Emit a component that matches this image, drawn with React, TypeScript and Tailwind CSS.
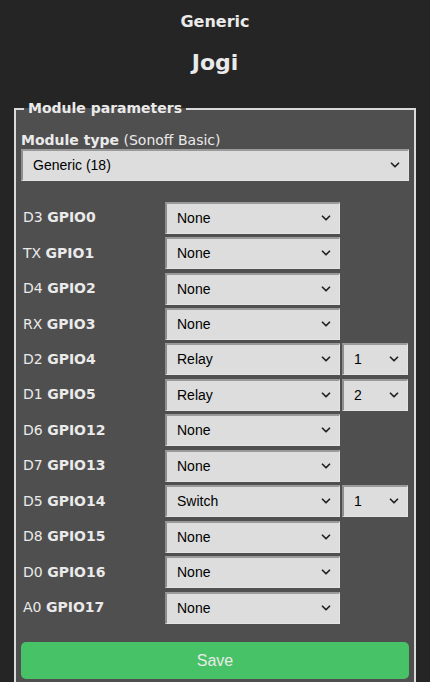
import { ChevronDown } from 'lucide-react'

type Row = { pin: string; gpio: string; value: string; index?: string }

const ROWS: Row[] = [
  { pin: 'D3', gpio: 'GPIO0',  value: 'None' },
  { pin: 'TX', gpio: 'GPIO1',  value: 'None' },
  { pin: 'D4', gpio: 'GPIO2',  value: 'None' },
  { pin: 'RX', gpio: 'GPIO3',  value: 'None' },
  { pin: 'D2', gpio: 'GPIO4',  value: 'Relay',  index: '1' },
  { pin: 'D1', gpio: 'GPIO5',  value: 'Relay',  index: '2' },
  { pin: 'D6', gpio: 'GPIO12', value: 'None' },
  { pin: 'D7', gpio: 'GPIO13', value: 'None' },
  { pin: 'D5', gpio: 'GPIO14', value: 'Switch', index: '1' },
  { pin: 'D8', gpio: 'GPIO15', value: 'None' },
  { pin: 'D0', gpio: 'GPIO16', value: 'None' },
  { pin: 'A0', gpio: 'GPIO17', value: 'None' },
]

function Select({ value, className }: { value: string; className: string }) {
  return (
    <div className={`relative ${className}`}>
      <select
        defaultValue={value}
        className="h-full w-full appearance-none border-l-2 border-t-2 border-r border-b border-l-[#8e8e8e] border-t-[#9a9a9a] border-r-[#e4e4e4] border-b-[#e4e4e4] bg-[#dddddd] pl-[10px] text-[14px] text-black outline-none [font-family:'Liberation_Sans',Arial,sans-serif]"
      >
        <option>{value}</option>
      </select>
      <ChevronDown
        size={14}
        strokeWidth={3}
        className="pointer-events-none absolute right-[7px] top-1/2 -translate-y-1/2 text-[#222]"
      />
    </div>
  )
}

export default function App() {
  return (
    <div className="min-h-screen bg-[#252525] text-[#eaeaea] [font-family:'DejaVu_Sans',Verdana,sans-serif]">
      <div className="ml-[14px] w-[402px]">
        <div className="pt-[12px] text-center">
          <h3 className="text-[16px] font-bold leading-[20px]">Generic</h3>
          <h2 className="mt-[18px] text-[22px] font-bold leading-[26px]">Jogi</h2>
        </div>

        <fieldset className="mt-[24px] min-h-[600px] border-2 border-[#dadada] bg-[#4f4f4f] px-[5px]">
          <legend className="ml-[3px] px-1 text-[14px] font-bold leading-[17px]">Module parameters</legend>

          <div className="pt-[15px] text-[14px] leading-[17px]">
            <b>Module type</b> (Sonoff Basic)
          </div>
          <Select value="Generic (18)" className="h-[32px] w-full" />

          <div className="mt-[19px] flex flex-col">
            {ROWS.map((r) => (
              <div key={r.gpio} className="flex h-[35.45px] items-center">
                <div className="w-[144px] pl-[2px] text-[14px]">
                  {r.pin} <b>{r.gpio}</b>
                </div>
                <Select value={r.value} className="h-[32px] w-[175px]" />
                {r.index && <Select value={r.index} className="ml-[2px] h-[32px] w-[66px]" />}
              </div>
            ))}
          </div>

          <button className="mt-[17px] h-[37px] w-full rounded-[5px] bg-[#47c266] text-[16px] text-[#eaeaea] [font-family:'Liberation_Sans',Arial,sans-serif]">
            Save
          </button>
        </fieldset>
      </div>
    </div>
  )
}
